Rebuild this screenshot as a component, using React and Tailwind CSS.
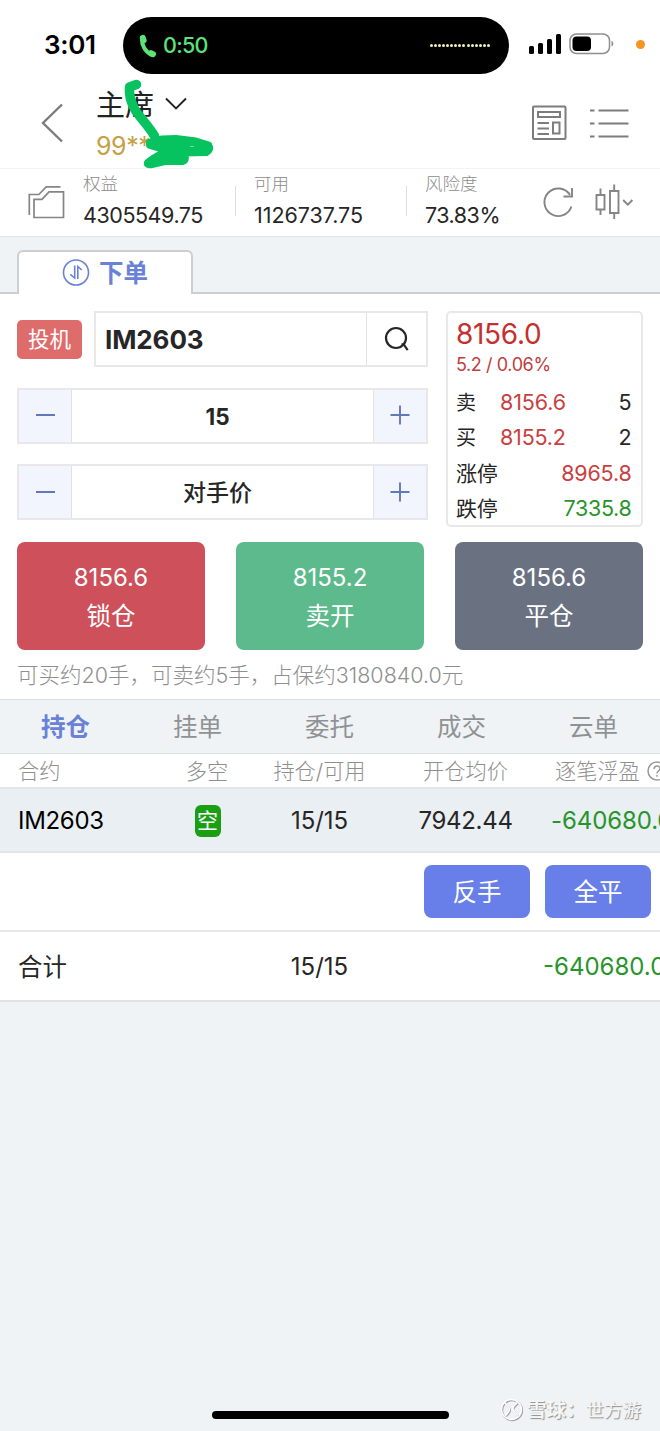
// src/App.jsx

const positionTabs = ["持仓", "挂单", "委托", "成交", "云单"];

const orderButtons = [
  { price: "8156.6", label: "锁仓", color: "bg-[#cd505a]" },
  { price: "8155.2", label: "卖开", color: "bg-[#5cba8c]" },
  { price: "8156.6", label: "平仓", color: "bg-[#6a7282]" },
];

// ── Icons ─────────────────────────────────────────────────────
function PhoneIcon() {
  return (
    <svg width="18" height="24" viewBox="0 0 18 24" fill="none" stroke="#5ce377" strokeLinecap="round">
      <path d="M3 5C2.500 11 6.500 18 12 20.500" strokeWidth="4" />
      <path d="m3.800 3.800.8 2.600M12 19.200l2 1" strokeWidth="6" />
    </svg>
  );
}

function BatteryIcon() {
  return (
    <svg width="46" height="22" viewBox="0 0 46 22" fill="none">
      <rect x="1" y="1" width="39.500" height="19.500" rx="6.500" stroke="#8e8e8e" strokeWidth="1.500" />
      <rect x="3.500" y="3.500" width="18.500" height="14.500" rx="4" fill="#000" />
      <path d="M42.500 7.800c2.400.8 2.400 5 0 5.800Z" fill="#8e8e8e" />
    </svg>
  );
}

function NewsIcon() {
  return (
    <svg width="36" height="36" viewBox="0 0 36 36" fill="none" stroke="#7c7c7c" strokeWidth="2">
      <rect x="2" y="1.500" width="32.500" height="32.500" rx="1" />
      <path d="M7 7h22v5H7ZM22 17.500h6.500v11H22ZM6.500 18h11.500M6.500 23.500h11.500M6.500 29h11.500" />
    </svg>
  );
}

function FoldersIcon() {
  return (
    <svg width="38" height="34" viewBox="0 0 38 34" fill="none" stroke="#858585" strokeWidth="1.700">
      <path d="M6 32.500V14.300h8L21 6.800H35.500V32.500Z" />
      <path d="M1.300 30V9.500h9.500L18.200 1.800h14.300" />
    </svg>
  );
}

function RefreshIcon() {
  return (
    <svg width="32" height="32" viewBox="0 0 32 32" fill="none" stroke="#858585" strokeWidth="1.900">
      <path d="M28.400 20.500A13.800 13.800 0 1 1 27 9" />
      <path d="M29 2v8.500h-8.500" />
    </svg>
  );
}

function CandlesIcon() {
  return (
    <svg width="39" height="36" viewBox="0 0 39 36" fill="none" stroke="#858585" strokeWidth="1.900">
      <path d="M1.500 11h8v14.500h-8ZM5.500 4.500V11M5.500 25.500v5.500M15 7h8.500v22H15ZM19.200.500V7M19.200 29v6" />
      <path d="m28.200 16 4.600 4.600 4.600-4.600" />
    </svg>
  );
}

function OrderIcon() {
  return (
    <svg width="28" height="28" viewBox="0 0 28 28" fill="none" stroke="#6a81d8" strokeWidth="1.600">
      <circle cx="14" cy="13.500" r="12.500" />
      <path d="M12.700 6.500v12.500L8.300 15.300M15.800 20V7.500l4 3.500" />
    </svg>
  );
}

function SearchIcon() {
  return (
    <svg width="26" height="26" viewBox="0 0 26 26" fill="none" stroke="#262626" strokeWidth="2.200">
      <circle cx="12" cy="12" r="10" />
      <path d="m17.500 18.500 2-.3 4.200 6" />
    </svg>
  );
}

function Scribble() {
  return (
    <svg className="absolute left-[120px] top-[76px]" width="100" height="96" viewBox="0 0 100 96" fill="#07c35f" stroke="#07c35f" strokeLinecap="round" strokeLinejoin="round">
      <path d="M16.500 8.500 9.500 11c-.5 7 1 14 4.500 21C19 41 28 49 34.500 60" fill="none" strokeWidth="9.500" />
      <path strokeWidth="6" d="M29 66 42 62.500 56 62 76 64.500 89 68.500Q92 74 86.500 77L64.500 77.500Q68 85 62.500 86L45 86 32 89Q26 90 27 86.500Q32 82 46 74.500L29 69.500Z" />
      <path d="M69.500 70.500c2-1 4-.5 5 0-1.500.8-3.500.6-5 0Z" fill="#8be0b2" stroke="none" />
    </svg>
  );
}

// ── Status bar ────────────────────────────────────────────────
function StatusBar() {
  return (
    <div className="flex h-[74px] items-start">
      <div className="mt-[30px] w-[123px] pl-[44px] text-[26px] font-semibold leading-[30px] tracking-[-0.3px] text-black">3:01</div>
      <div className="mt-[17px] flex h-[57px] w-[386px] items-center rounded-full bg-black pl-[16px] pr-[19px]">
        <PhoneIcon />
        <span className="ml-[6px] text-[21.500px] font-medium tracking-[-0.7px] text-[#5ce377]">0:50</span>
        <div className="ml-auto flex gap-[1.100px]">
          {Array.from({ length: 15 }, (_, i) => (
            <i key={i} className="size-[3px] rounded-full bg-[#f2f0b4]" />
          ))}
        </div>
      </div>
      <div className="ml-[20px] mt-[34px] flex h-[20px] items-end gap-[4px]">
        <i className="h-[8px] w-[5px] rounded-[1.500px] bg-black" />
        <i className="h-[11px] w-[5px] rounded-[1.500px] bg-black" />
        <i className="h-[15px] w-[5px] rounded-[1.500px] bg-black" />
        <i className="h-[20px] w-[5px] rounded-[1.500px] bg-black" />
      </div>
      <div className="ml-[8px] mt-[33px]"><BatteryIcon /></div>
      <i className="ml-[21px] mt-[40px] size-[9px] rounded-full bg-[#f7931e]" />
    </div>
  );
}

// ── Title bar ─────────────────────────────────────────────────
function Header() {
  return (
    <header className="flex h-[95px] border-b border-[#f3f3f3]">
      <svg className="ml-[41px] mt-[29px]" width="22" height="40" viewBox="0 0 22 40" fill="none" stroke="#7c7c7c" strokeWidth="2.400">
        <path d="M21 1.500 2 20l19 18.500" />
      </svg>
      <div className="ml-[33px] mt-[12px]">
        <div className="flex items-center">
          <span className="pt-[2px] text-[29px] leading-[36px] text-[#222]">主席</span>
          <svg className="ml-[10px] -mt-[5px]" width="24" height="14" viewBox="0 0 24 14" fill="none" stroke="#222" strokeWidth="1.900">
            <path d="m2 2.500 10 10L22 2.500" />
          </svg>
        </div>
        <div className="mt-[7px] text-[25px] leading-[30px] tracking-[-0.4px] text-[#c6a044]">99**</div>
      </div>
      <div className="ml-auto mr-[31px] mt-[31px] flex">
        <NewsIcon />
        <svg className="ml-[22px]" width="40" height="36" viewBox="0 0 40 36" stroke="#7c7c7c" strokeWidth="2">
          <path d="M1 5.500h4.500M9.500 5.500H39.500M1 18.500h4.500M9.500 18.500H39.500M1 31.500h4.500M9.500 31.500H39.500" />
        </svg>
      </div>
    </header>
  );
}

function Stat({ label, value, className }) {
  return (
    <div className={className}>
      <div className="text-[17.500px] font-light leading-[20px] tracking-normal text-[#8c8c8c]">{label}</div>
      <div className="mt-[9px] text-[21.500px] leading-[24px] text-[#262626]">{value}</div>
    </div>
  );
}

function AccountBar() {
  return (
    <section className="flex h-[68px] border-b border-[#dfe1e2]">
      <div className="ml-[28px] mt-[16px]"><FoldersIcon /></div>
      <Stat className="ml-[17px] mt-[5px] w-[152px] tracking-[-0.45px]" label="权益" value="4305549.75" />
      <i className="mt-[17px] h-[30px] w-px bg-[#dedede]" />
      <Stat className="ml-[18px] mt-[5px] w-[152px] tracking-[-0.05px]" label="可用" value="1126737.75" />
      <i className="mt-[17px] h-[30px] w-px bg-[#dedede]" />
      <Stat className="ml-[18px] mt-[5px] w-[118px] tracking-[-0.5px]" label="风险度" value="73.83%" />
      <div className="mt-[17px]"><RefreshIcon /></div>
      <div className="ml-[20px] mt-[15px]"><CandlesIcon /></div>
    </section>
  );
}

// ── Order form ────────────────────────────────────────────────
function Stepper({ value, className }) {
  return (
    <div className="flex h-[56px] border-2 border-[#e8e8ea]">
      <button className="flex w-[53px] items-center justify-center border-r border-[#e2e2e6] bg-[#f2f4fe] pb-px">
        <i className="h-[2px] w-[19px] bg-[#6178ba]" />
      </button>
      <div className={`flex flex-1 items-center justify-center pr-[10px] pt-[2px] text-[#262626] ${className}`}>{value}</div>
      <button className="flex w-[53px] items-center justify-center border-l border-[#e2e2e6] bg-[#f2f4fe] pb-px">
        <svg width="20" height="20" viewBox="0 0 20 20" stroke="#6178ba" strokeWidth="1.900">
          <path d="M.5 10h19M10 .5v19" />
        </svg>
      </button>
    </div>
  );
}

function Quote() {
  return (
    <div className="h-[216px] w-[197px] rounded-[5px] border-2 border-[#e8e8ea] pl-[8px] pr-[9.500px] text-[#262626]">
      <div className="mt-[4px] text-[28px] leading-[34px] tracking-[-0.3px] text-[#c5302f]">8156.0</div>
      <div className="mt-[3px] text-[18px] leading-[22px] tracking-[-0.4px] text-[#c0403f]">5.2 / 0.06%</div>
      <div className="mt-[8px] flex h-[35.500px] items-center text-[21.500px] tracking-[-0.1px]">
        <span className="w-[44px] pt-[2px] text-[20px]">卖</span>
        <span className="text-[#c9403f]">8156.6</span>
        <span className="ml-auto">5</span>
      </div>
      <div className="flex h-[35.500px] items-center text-[21.500px] tracking-[-0.2px]">
        <span className="w-[44px] pt-[2px] text-[20px]">买</span>
        <span className="text-[#c9403f]">8155.2</span>
        <span className="ml-auto">2</span>
      </div>
      <div className="flex h-[35.500px] items-center justify-between text-[21.500px] tracking-[-0.2px]">
        <span className="pt-px text-[21px]">涨停</span>
        <span className="text-[#c9403f]">8965.8</span>
      </div>
      <div className="flex h-[35.500px] items-center justify-between text-[21.500px] tracking-[-0.3px]">
        <span className="text-[21px]">跌停</span>
        <span className="text-[#28942b]">7335.8</span>
      </div>
    </div>
  );
}

function OrderForm() {
  return (
    <section className="px-[17px] pt-[17px]">
      <div className="flex justify-between">
        <div className="flex w-[411px] flex-col gap-[20.500px]">
          <div className="flex h-[56px] items-center justify-between">
            <div className="flex h-[39px] w-[65px] items-center justify-center rounded-[5px] bg-[#de6c6b] pt-px text-[21.500px] text-white">投机</div>
            <div className="flex h-[56px] w-[334px] border-2 border-[#e8e8ea]">
              <div className="flex flex-1 items-center pl-[9px] text-[26px] font-bold tracking-[-0.1px] text-[#262626]">IM2603</div>
              <div className="flex w-[60px] items-center justify-center border-l border-[#e2e2e6] pl-px"><SearchIcon /></div>
            </div>
          </div>
          <Stepper value="15" className="text-[22.500px] font-bold" />
          <Stepper value="对手价" className="text-[23px] font-medium" />
        </div>
        <Quote />
      </div>
      <div className="mt-[14.500px] flex justify-between">
        {orderButtons.map(b => (
          <button key={b.label} className={`flex h-[108.500px] w-[188px] flex-col items-center rounded-lg pt-[19px] text-white ${b.color}`}>
            <span className="text-[24px] leading-[34px]">{b.price}</span>
            <span className="mt-[3px] text-[24.500px] leading-[36px]">{b.label}</span>
          </button>
        ))}
      </div>
      <div className="flex h-[49px] items-center whitespace-nowrap pt-[2px] text-[21.500px] font-light text-[#8f8f8f]">
        可买约20手，可卖约5手，占保约3180840.0元
      </div>
    </section>
  );
}

// ── Positions ─────────────────────────────────────────────────
function Positions() {
  return (
    <section className="overflow-hidden bg-white text-[24px] text-[#262626]">
      <nav className="flex h-[55px] border-y border-[#dcdfe2] bg-[#eff3f5] pt-[2px] text-[24.500px]">
        {positionTabs.map((tab, i) => (
          <div
            key={tab}
            className={`flex w-[132px] items-center justify-center pr-px ${i === 0 ? "font-bold text-[#6a81d8]" : "text-[#8f9293]"}`}
          >
            {tab}
          </div>
        ))}
      </nav>
      <div className="flex h-[35px] items-center whitespace-nowrap border-b-2 border-[#e2e6e8] pt-[2px] text-[21.200px] font-light text-[#8f8f8f] *:shrink-0">
        <div className="w-[154px] pl-[18px]">合约</div>
        <div className="w-[106px] text-center">多空</div>
        <div className="w-[119px] text-center">持仓/可用</div>
        <div className="w-[173px] text-center">开仓均价</div>
        <div className="flex items-center pl-[3px]">
          逐笔浮盈
          <svg className="-mt-[2px] ml-[7px] shrink-0" width="20" height="20" viewBox="0 0 20 20" fill="none" stroke="#9a9a9a" strokeWidth="1.500">
            <circle cx="10" cy="10" r="9" />
            <path d="M7 8c0-4 6-4 6-.5 0 2.500-3 2.300-3 5M10 14v1.800" />
          </svg>
        </div>
      </div>
      <div className="flex h-[64px] items-center border-b-2 border-[#e2e4e6] bg-[#eaeff3] pt-[2px] tracking-[-0.1px] *:shrink-0">
        <div className="w-[154px] pl-[18px] tracking-[-0.3px] text-black">IM2603</div>
        <div className="-mt-px flex w-[106px] justify-center pl-px">
          <span className="flex h-[32px] w-[26px] items-center justify-center rounded-[6px] bg-[#1a9f14] text-[21px] leading-none text-white">空</span>
        </div>
        <div className="w-[119px] text-center">15/15</div>
        <div className="w-[173px] text-center tracking-[-0.3px]">7942.44</div>
        <div className="-ml-[1px] text-[#28942b]">-640680.0</div>
      </div>
      <div className="flex h-[79px] items-center justify-end gap-[15px] border-b-2 border-[#e6e8ea] pr-[9px] text-[24.500px] text-white">
        <button className="h-[53px] w-[106px] rounded-lg bg-[#687fea] pt-px">反手</button>
        <button className="h-[53px] w-[106px] rounded-lg bg-[#687fea] pt-px">全平</button>
      </div>
      <div className="flex h-[70px] items-center border-b-2 border-[#dfe3e5] pt-[2px] *:shrink-0">
        <div className="w-[260px] pl-[18px] text-[24.500px]">合计</div>
        <div className="w-[119px] text-center">15/15</div>
        <div className="ml-[164px] text-[#28942b]">-640680.0</div>
      </div>
    </section>
  );
}

function Watermark() {
  return (
    <div className="ml-[51px] mt-px flex items-center whitespace-nowrap text-[18.500px] leading-[24px] text-[#f4f6f6] [text-shadow:1px_1px_1px_#8c8c8c]">
      <svg className="mr-[3px]" width="24" height="24" viewBox="0 0 24 24" fill="none" strokeLinecap="round">
        <g stroke="#a0a2a3" strokeWidth="1.600" transform="translate(.8 .9)">
          <circle cx="11.500" cy="11.500" r="10" />
          <path d="m5 5 4 5c1 1.500.5 2.500-.5 4L6 17M17 5l-3 3c-1.500 1.500-1.500 2.500-.5 4l4 5" />
        </g>
        <g stroke="#fff" strokeWidth="1.400">
          <circle cx="11.500" cy="11.500" r="10" />
          <path d="m5 5 4 5c1 1.500.5 2.500-.5 4L6 17M17 5l-3 3c-1.500 1.500-1.500 2.500-.5 4l4 5" />
        </g>
      </svg>
      <span className="text-[19.500px] font-bold">雪球：</span>
      <span>世方游</span>
    </div>
  );
}

// ── App root ──────────────────────────────────────────────────
export default function App() {
  return (
    <div className="relative flex h-[1431px] w-[660px] flex-col overflow-hidden bg-[#eff3f5] font-['Inter','Noto_Sans_CJK_SC',sans-serif]">
      <div className="bg-white">
        <StatusBar />
        <Header />
        <AccountBar />
      </div>
      <div className="flex h-[57px] items-end">
        <i className="h-[2px] w-[17px] bg-[#cccfd1]" />
        <div className="flex h-[44px] w-[176px] items-center justify-center rounded-t-[6px] border-2 border-b-0 border-[#cccfd1] bg-white text-[24.500px] font-bold text-[#6a81d8]">
          <OrderIcon />
          <span className="ml-[9px]">下单</span>
        </div>
        <i className="h-[2px] flex-1 bg-[#cccfd1]" />
      </div>
      <div className="bg-white"><OrderForm /></div>
      <Positions />
      <footer className="mt-auto flex h-[34px] items-start">
        <div className="ml-[212px] mt-[14px] h-[8px] w-[237px] shrink-0 rounded-full bg-black" />
        <Watermark />
      </footer>
      <Scribble />
    </div>
  );
}
